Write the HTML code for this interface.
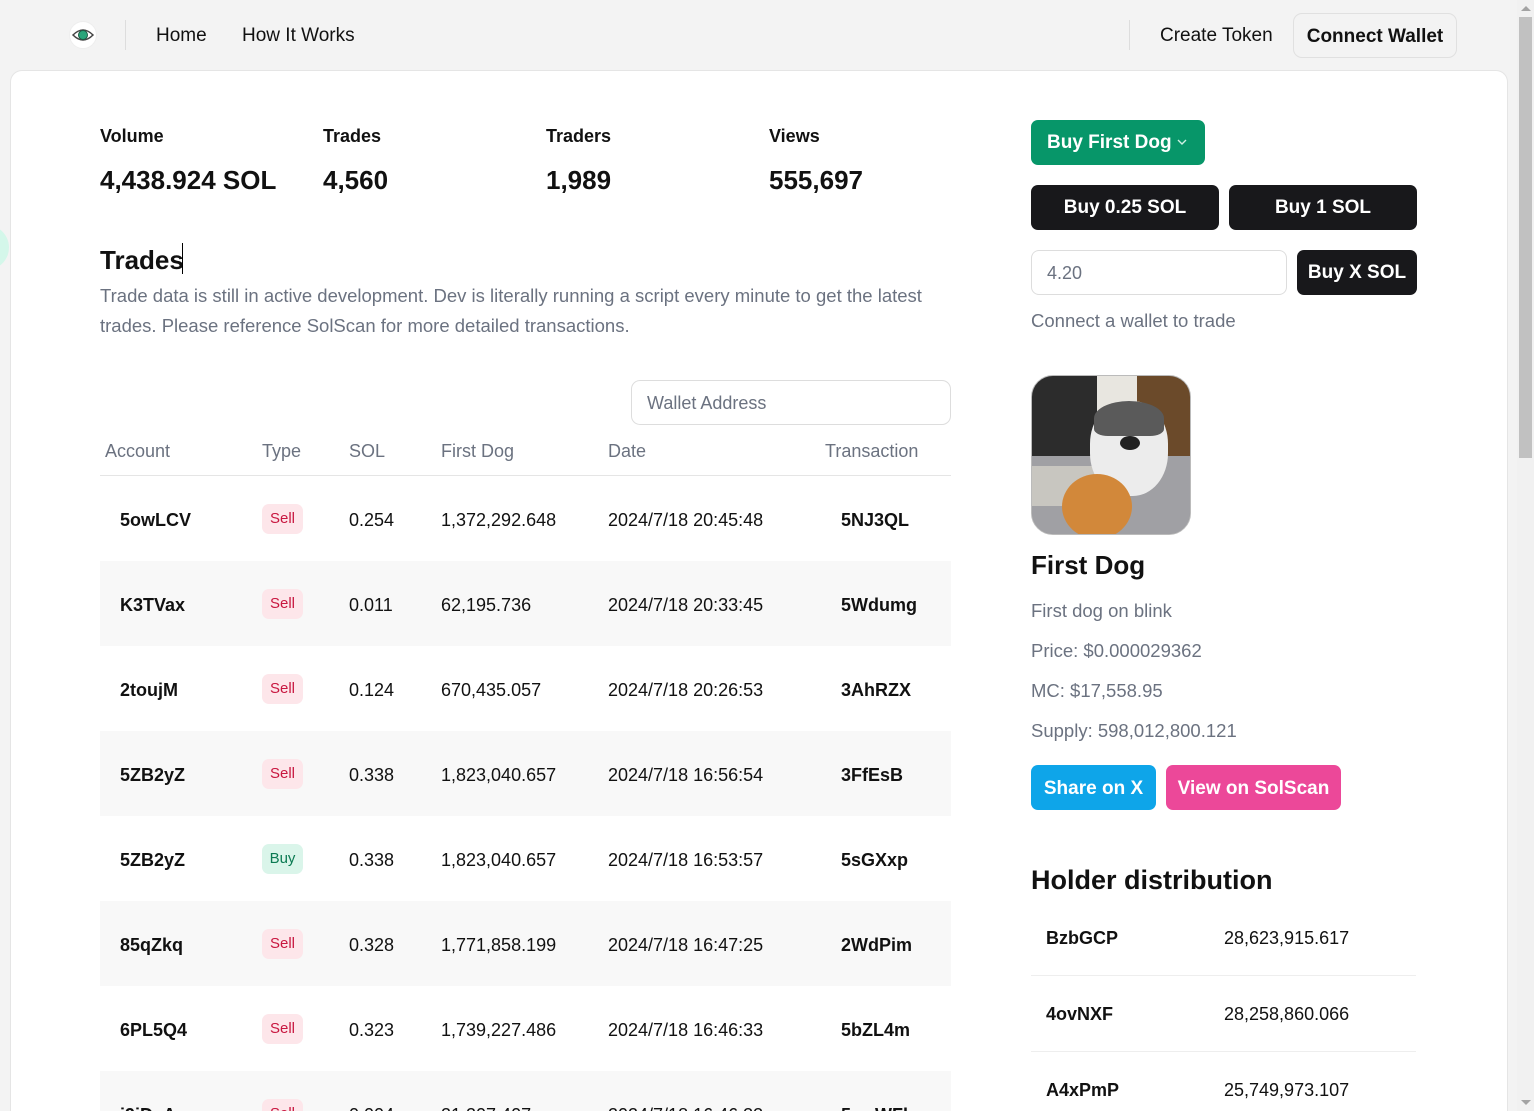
<!DOCTYPE html>
<html><head><meta charset="utf-8">
<style>
*{margin:0;padding:0;box-sizing:border-box}
html,body{width:1534px;height:1111px;overflow:hidden;background:#f3f3f3;font-family:"Liberation Sans",sans-serif;color:#111;position:relative}
.a{position:absolute;white-space:nowrap}
.card{position:absolute;left:10px;top:70px;width:1498px;height:1041px;background:#fff;border:1px solid #e5e5e5;border-bottom:none;border-radius:12px 12px 0 0}
.g{color:#6b7280}
.row{position:absolute;left:100px;width:851px;height:85px}
.row.s{background:#f8f8f8}
.row div{position:absolute;top:2px;line-height:85px;font-size:18px;white-space:nowrap}
.row .b{font-weight:bold}
.badge{position:absolute;top:28px!important;left:162px;width:41px;height:30px;line-height:30px!important;border-radius:7px;text-align:center;font-size:15px!important}
.sell{background:#fde6ea;color:#c8163f}
.buy{background:#daf5ea;color:#0b7a52}
.btn{position:absolute;border-radius:7px;color:#fff;font-weight:bold;font-size:19px;text-align:center}
.h{position:absolute;left:1031px;width:385px;height:76px;border-bottom:1px solid #eee}
.h div{position:absolute;top:0;line-height:76px;font-size:18px}
</style></head><body>
<svg class="a" style="left:69px;top:21px" width="28" height="28" viewBox="0 0 28 28"><circle cx="14" cy="14" r="13.5" fill="#fff" stroke="#eee"/><path d="M4 14 Q14 4 24 14 Q14 24 4 14Z" fill="none" stroke="#444" stroke-width="1.5"/><circle cx="14" cy="14" r="4.5" fill="#2aa57a" stroke="#1a5c44"/></svg>
<div class="a" style="left:125px;top:20px;width:1px;height:30px;background:#ddd"></div>
<div class="a" style="left:156px;top:24px;font-size:19px;line-height:24px">Home</div>
<div class="a" style="left:242px;top:24px;font-size:19px;line-height:24px">How It Works</div>
<div class="a" style="left:1129px;top:20px;width:1px;height:30px;background:#ddd"></div>
<div class="a" style="left:1160px;top:24px;font-size:19px;line-height:24px">Create Token</div>
<div class="a" style="left:1293px;top:13px;width:164px;height:45px;border:1px solid #e0e0e0;border-radius:9px;font-weight:bold;font-size:19px;line-height:45px;text-align:center">Connect Wallet</div>
<div class="a" style="left:-36px;top:225px;width:45px;height:45px;border-radius:50%;background:#d4f7ea"></div>
<div class="card"></div>
<div class="a" style="left:1517px;top:0;width:17px;height:1111px;background:#f1f1f1"></div>
<div class="a" style="left:1519px;top:17px;width:13px;height:441px;background:#c1c1c1"></div>
<div class="a" style="left:1521px;top:6px;width:0;height:0;border-left:5px solid transparent;border-right:5px solid transparent;border-bottom:5px solid #a3a3a3"></div>
<div class="a" style="left:1521px;top:1100px;width:0;height:0;border-left:5px solid transparent;border-right:5px solid transparent;border-top:5px solid #a3a3a3"></div>

<div class="a" style="left:100px;top:125px;font-size:18px;font-weight:bold;line-height:22px">Volume</div>
<div class="a" style="left:323px;top:125px;font-size:18px;font-weight:bold;line-height:22px">Trades</div>
<div class="a" style="left:546px;top:125px;font-size:18px;font-weight:bold;line-height:22px">Traders</div>
<div class="a" style="left:769px;top:125px;font-size:18px;font-weight:bold;line-height:22px">Views</div>
<div class="a" style="left:100px;top:164px;font-size:26px;font-weight:bold;line-height:32px">4,438.924 SOL</div>
<div class="a" style="left:323px;top:164px;font-size:26px;font-weight:bold;line-height:32px">4,560</div>
<div class="a" style="left:546px;top:164px;font-size:26px;font-weight:bold;line-height:32px">1,989</div>
<div class="a" style="left:769px;top:164px;font-size:26px;font-weight:bold;line-height:32px">555,697</div>
<div class="a" style="left:100px;top:244px;font-size:26px;font-weight:bold;line-height:32px">Trades</div>
<div class="a" style="left:182px;top:243px;width:1px;height:31px;background:#000"></div>
<div class="a g" style="left:100px;top:281px;font-size:18.5px;line-height:30px;white-space:normal;width:870px">Trade data is still in active development. Dev is literally running a script every minute to get the latest<br>trades. Please reference SolScan for more detailed transactions.</div>
<div class="a g" style="left:631px;top:380px;width:320px;height:45px;border:1px solid #ddd;border-radius:9px;padding-left:15px;line-height:45px;font-size:18px">Wallet Address</div>
<div class="a g" style="left:105px;top:440px;font-size:18px;line-height:22px">Account</div>
<div class="a g" style="left:262px;top:440px;font-size:18px;line-height:22px">Type</div>
<div class="a g" style="left:349px;top:440px;font-size:18px;line-height:22px">SOL</div>
<div class="a g" style="left:441px;top:440px;font-size:18px;line-height:22px">First Dog</div>
<div class="a g" style="left:608px;top:440px;font-size:18px;line-height:22px">Date</div>
<div class="a g" style="left:825px;top:440px;font-size:18px;line-height:22px">Transaction</div>
<div class="a" style="left:100px;top:475px;width:851px;height:1px;background:#e5e5e5"></div>

<div class="row" style="top:476px"><div class="b" style="left:20px">5owLCV</div><div class="badge sell">Sell</div><div style="left:249px">0.254</div><div style="left:341px">1,372,292.648</div><div style="left:508px">2024/7/18 20:45:48</div><div class="b" style="left:741px">5NJ3QL</div></div>
<div class="row s" style="top:561px"><div class="b" style="left:20px">K3TVax</div><div class="badge sell">Sell</div><div style="left:249px">0.011</div><div style="left:341px">62,195.736</div><div style="left:508px">2024/7/18 20:33:45</div><div class="b" style="left:741px">5Wdumg</div></div>
<div class="row" style="top:646px"><div class="b" style="left:20px">2toujM</div><div class="badge sell">Sell</div><div style="left:249px">0.124</div><div style="left:341px">670,435.057</div><div style="left:508px">2024/7/18 20:26:53</div><div class="b" style="left:741px">3AhRZX</div></div>
<div class="row s" style="top:731px"><div class="b" style="left:20px">5ZB2yZ</div><div class="badge sell">Sell</div><div style="left:249px">0.338</div><div style="left:341px">1,823,040.657</div><div style="left:508px">2024/7/18 16:56:54</div><div class="b" style="left:741px">3FfEsB</div></div>
<div class="row" style="top:816px"><div class="b" style="left:20px">5ZB2yZ</div><div class="badge buy">Buy</div><div style="left:249px">0.338</div><div style="left:341px">1,823,040.657</div><div style="left:508px">2024/7/18 16:53:57</div><div class="b" style="left:741px">5sGXxp</div></div>
<div class="row s" style="top:901px"><div class="b" style="left:20px">85qZkq</div><div class="badge sell">Sell</div><div style="left:249px">0.328</div><div style="left:341px">1,771,858.199</div><div style="left:508px">2024/7/18 16:47:25</div><div class="b" style="left:741px">2WdPim</div></div>
<div class="row" style="top:986px"><div class="b" style="left:20px">6PL5Q4</div><div class="badge sell">Sell</div><div style="left:249px">0.323</div><div style="left:341px">1,739,227.486</div><div style="left:508px">2024/7/18 16:46:33</div><div class="b" style="left:741px">5bZL4m</div></div>
<div class="row s" style="top:1071px;height:40px;overflow:hidden"><div class="b" style="left:20px">i9iDxA</div><div class="badge sell">Sell</div><div style="left:249px">0.004</div><div style="left:341px">21,207.407</div><div style="left:508px">2024/7/18 16:46:33</div><div class="b" style="left:741px">5xwWFl</div></div>

<div class="btn" style="left:1031px;top:120px;width:174px;height:45px;background:#079669;line-height:45px;text-align:left;padding-left:16px">Buy First Dog<svg style="position:absolute;left:146px;top:18px" width="10" height="8" viewBox="0 0 10 8"><path d="M1 2 L5 6 L9 2" fill="none" stroke="#d0f0e4" stroke-width="1.4"/></svg></div>
<div class="btn" style="left:1031px;top:185px;width:188px;height:45px;background:#18181b;line-height:45px">Buy 0.25 SOL</div>
<div class="btn" style="left:1229px;top:185px;width:188px;height:45px;background:#18181b;line-height:45px">Buy 1 SOL</div>
<div class="a g" style="left:1031px;top:250px;width:256px;height:45px;border:1px solid #ddd;border-radius:8px;padding-left:15px;line-height:45px;font-size:18px">4.20</div>
<div class="btn" style="left:1297px;top:250px;width:120px;height:45px;background:#18181b;line-height:45px">Buy X SOL</div>
<div class="a g" style="left:1031px;top:310px;font-size:18.5px;line-height:22px">Connect a wallet to trade</div>
<div class="a" style="left:1031px;top:375px;width:160px;height:160px;border-radius:22px;overflow:hidden;border:1px solid #bbb;background:#8f8f93">
<div class="a" style="left:0;top:0;width:65px;height:90px;background:#2c2c2c"></div>
<div class="a" style="left:65px;top:0;width:40px;height:60px;background:#e8e6e0"></div>
<div class="a" style="left:105px;top:0;width:55px;height:100px;background:#6b4a2a"></div>
<div class="a" style="left:0;top:80px;width:160px;height:80px;background:#a0a0a4"></div>
<div class="a" style="left:0;top:90px;width:70px;height:40px;background:#c8c6c0"></div>
<div class="a" style="left:58px;top:25px;width:78px;height:95px;border-radius:45%;background:#ececec"></div>
<div class="a" style="left:62px;top:25px;width:70px;height:35px;border-radius:50% 50% 20% 20%;background:#5a5a5a"></div>
<div class="a" style="left:88px;top:60px;width:20px;height:14px;border-radius:50%;background:#222"></div>
<div class="a" style="left:30px;top:98px;width:70px;height:65px;border-radius:50%;background:#d2883a"></div>
</div>
<div class="a" style="left:1031px;top:549px;font-size:26px;font-weight:bold;line-height:32px">First Dog</div>
<div class="a g" style="left:1031px;top:600px;font-size:18.5px;line-height:22px">First dog on blink</div>
<div class="a g" style="left:1031px;top:640px;font-size:18.5px;line-height:22px">Price: $0.000029362</div>
<div class="a g" style="left:1031px;top:680px;font-size:18.5px;line-height:22px">MC: $17,558.95</div>
<div class="a g" style="left:1031px;top:720px;font-size:18.5px;line-height:22px">Supply: 598,012,800.121</div>
<div class="btn" style="left:1031px;top:765px;width:125px;height:45px;background:#0ea5e9;line-height:47px">Share on X</div>
<div class="btn" style="left:1166px;top:765px;width:175px;height:45px;background:#ec4899;line-height:47px">View on SolScan</div>
<div class="a" style="left:1031px;top:864px;font-size:27px;font-weight:bold;line-height:32px">Holder distribution</div>
<div class="h" style="top:900px"><div style="left:15px;font-weight:bold">BzbGCP</div><div style="left:193px">28,623,915.617</div></div>
<div class="h" style="top:976px"><div style="left:15px;font-weight:bold">4ovNXF</div><div style="left:193px">28,258,860.066</div></div>
<div class="h" style="top:1052px;border-bottom:none"><div style="left:15px;font-weight:bold">A4xPmP</div><div style="left:193px">25,749,973.107</div></div>
</body></html>
